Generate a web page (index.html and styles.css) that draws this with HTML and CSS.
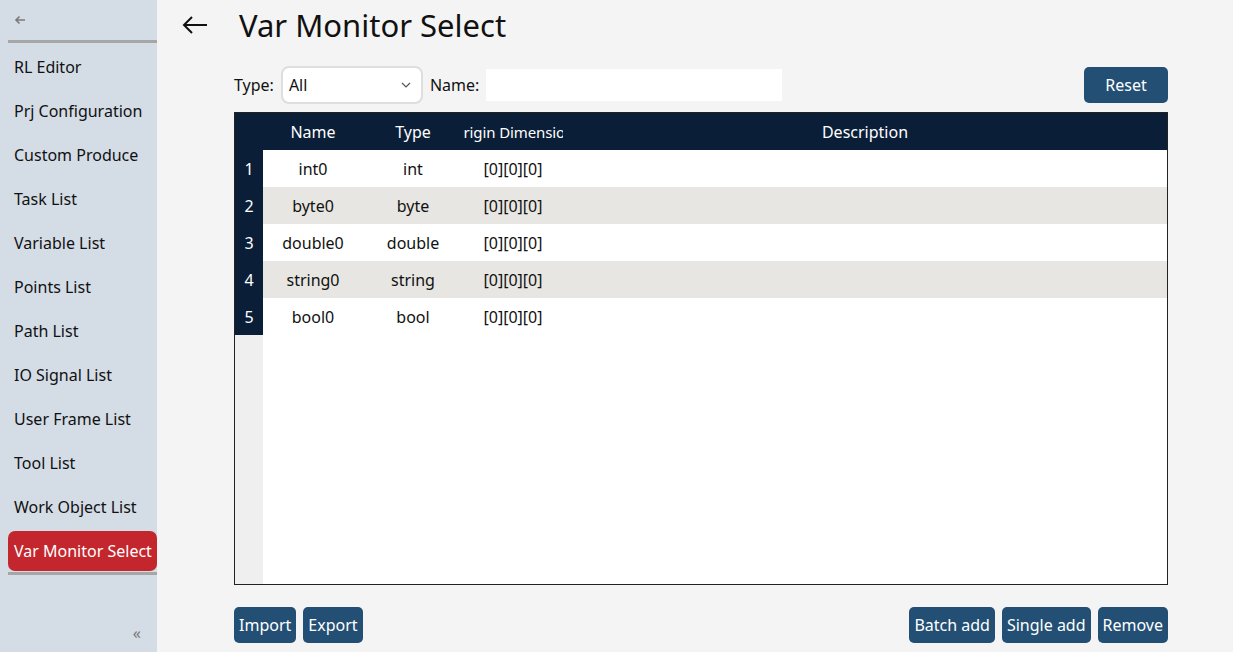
FILE: index.html
```html
<!DOCTYPE html>
<html>
  <head>
    <title>Var Monitor Select</title>
    <meta charset="UTF-8" />
    <link rel="stylesheet" href="styles.css">
  </head>

  <body>
    <div class="app">
      <!-- side menu -->
      <div class="sidebar">
        <div class="side-top">
          <svg width="12" height="10" viewBox="0 0 12 10"><path d="M11 5H2M5.5 1.5L2 5l3.5 3.5" fill="none" stroke="#7a7a7a" stroke-width="1.6"/></svg>
        </div>
        <div class="sep"></div>
        <div class="menu">
          <div class="item">RL Editor</div>
          <div class="item">Prj Configuration</div>
          <div class="item">Custom Produce</div>
          <div class="item">Task List</div>
          <div class="item">Variable List</div>
          <div class="item">Points List</div>
          <div class="item">Path List</div>
          <div class="item">IO Signal List</div>
          <div class="item">User Frame List</div>
          <div class="item">Tool List</div>
          <div class="item">Work Object List</div>
          <div class="item active">Var Monitor Select</div>
        </div>
        <div class="sep"></div>
        <div class="collapse">«</div>
      </div>

      <!-- main -->
      <div class="main">
        <div class="title-row">
          <svg class="back" width="26" height="20" viewBox="0 0 26 20"><path d="M25 10H2M10 2L2 10l8 8" fill="none" stroke="#111" stroke-width="2"/></svg>
          <h1>Var Monitor Select</h1>
        </div>

        <div class="filter">
          <label>Type:</label>
          <div class="select">
            <span>All</span>
            <svg width="10" height="6" viewBox="0 0 10 6"><path d="M1 1l4 4 4-4" fill="none" stroke="#555" stroke-width="1.2"/></svg>
          </div>
          <label>Name:</label>
          <div class="input"></div>
          <div class="spacer"></div>
          <button class="btn">Reset</button>
        </div>

        <div class="table">
          <div class="row head">
            <div class="num"></div>
            <div class="cell">Name</div>
            <div class="cell">Type</div>
            <div class="cell clip"><span>Origin Dimension</span></div>
            <div class="cell desc">Description</div>
          </div>
          <div class="rows"></div>
          <div class="filler"><div class="num"></div></div>
        </div>

        <div class="actions">
          <button class="btn">Import</button>
          <button class="btn">Export</button>
          <div class="spacer"></div>
          <button class="btn">Batch add</button>
          <button class="btn">Single add</button>
          <button class="btn">Remove</button>
        </div>
      </div>
    </div>
    <script>
    const VARS = [
      ["int0", "int"],
      ["byte0", "byte"],
      ["double0", "double"],
      ["string0", "string"],
      ["bool0", "bool"]
    ];
    const rows = document.querySelector(".rows");
    VARS.forEach((v, i) => {
      const row = document.createElement("div");
      row.className = "row" + (i % 2 ? " alt" : "");
      row.innerHTML =
        `<div class="num">${i + 1}</div>` +
        `<div class="cell">${v[0]}</div>` +
        `<div class="cell">${v[1]}</div>` +
        `<div class="cell">[0][0][0]</div>` +
        `<div class="cell desc"></div>`;
      rows.appendChild(row);
    });
    </script>
  </body>
</html>
```

FILE: styles.css
```css
html, body {
  margin: 0;
  height: 100%;
  overflow: hidden;
}
body {
  font-family: "Noto Sans", "Open Sans", sans-serif;
  font-size: 16px;
  color: #111;
  background: #f4f4f4;
}
.app {
  display: flex;
  height: 100%;
}
.sidebar {
  width: 157px;
  flex-shrink: 0;
  background: #d4dce6;
  padding-left: 8px;
  box-sizing: border-box;
  display: flex;
  flex-direction: column;
}
.side-top {
  height: 40px;
  padding-left: 6px;
  display: flex;
  align-items: center;
}
.sep {
  height: 3px;
  background: #a6a6a6;
  margin-bottom: 4px;
}
.menu {
  display: flex;
  flex-direction: column;
  gap: 4px;
  margin-bottom: 1px;
}
.item {
  height: 40px;
  line-height: 40px;
  padding-left: 6px;
  white-space: nowrap;
}
.item.active {
  background: #c4262e;
  color: #fff;
  border-radius: 7px;
}
.collapse {
  margin-top: auto;
  margin-bottom: 8px;
  text-align: right;
  padding-right: 16px;
  color: #777;
  font-size: 16px;
}
.main {
  flex: 1;
  padding: 0 65px 8px 77px;
  display: flex;
  flex-direction: column;
  min-width: 0;
}
.title-row {
  height: 50px;
  display: flex;
  align-items: center;
  margin-left: -52px;
  gap: 31px;
}
h1 {
  margin: 0;
  font-weight: normal;
  font-size: 31px;
}
.filter {
  margin-top: 16px;
  height: 38px;
  display: flex;
  align-items: center;
  gap: 7px;
}
.select {
  width: 142px;
  height: 38px;
  border: 2px solid #dedede;
  border-radius: 8px;
  background: #fff;
  display: flex;
  align-items: center;
  justify-content: space-between;
  padding: 0 10px 0 6px;
  box-sizing: border-box;
}
.input {
  width: 296px;
  height: 32px;
  background: #fff;
}
.spacer {
  flex: 1;
}
.btn {
  font: inherit;
  color: #fff;
  background: #234f75;
  border: none;
  border-radius: 5px;
  height: 36px;
  padding: 0 5px;
  cursor: pointer;
}
.filter .btn {
  width: 84px;
}
.table {
  margin-top: 8px;
  height: 473px;
  border: 1px solid #222;
  background: #fff;
  display: flex;
  flex-direction: column;
  box-sizing: border-box;
}
.row {
  display: flex;
  height: 37px;
  align-items: stretch;
}
.row.head {
  background: #0b1e38;
  color: #fff;
  height: 37px;
}
.row.alt {
  background: #e8e6e2;
}
.num {
  width: 28px;
  flex-shrink: 0;
  background: #0b1e38;
  color: #fff;
  display: flex;
  align-items: center;
  justify-content: center;
}
.cell {
  width: 100px;
  flex-shrink: 0;
  display: flex;
  align-items: center;
  justify-content: center;
  white-space: nowrap;
}
.cell.clip {
  overflow: hidden;
  font-size: 15px;
  letter-spacing: -0.1px;
}
.cell.desc {
  flex: 1;
}
.filler {
  flex: 1;
  display: flex;
}
.filler .num {
  background: #efefef;
}
.actions {
  margin-top: 22px;
  display: flex;
  gap: 7px;
}
```
